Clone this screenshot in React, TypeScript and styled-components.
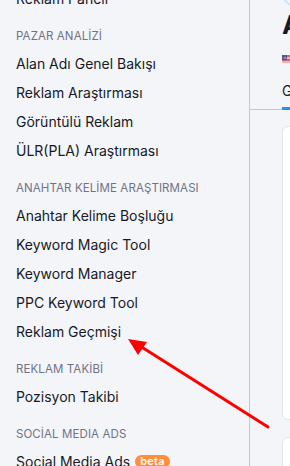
import React from "react";
import styled, { createGlobalStyle } from "styled-components";

const Global = createGlobalStyle`
  html, body { margin: 0; padding: 0; background: #f4f5f9; }
  body { font-family: Inter, "Noto Sans", sans-serif; overflow: hidden; }
  * { box-sizing: border-box; }
`;

const Page = styled.div`
  position: relative;
  width: 290px;
  height: 466px;
  display: flex;
  overflow: hidden;
  background: #f4f5f9;
`;

const Sidebar = styled.nav`
  width: 250px;
  flex: none;
  border-right: 1px solid #c6c7cc;
  display: flex;
  flex-direction: column;
  margin-top: -16px;
`;

const Header = styled.div`
  flex: none;
  height: 26px;
  margin-top: 10px;
  padding-left: 16px;
  display: flex;
  align-items: center;
  font-size: 11.5px;
  color: #6f7385;
  letter-spacing: 0.1px;
  white-space: nowrap;
`;

const Item = styled.div`
  flex: none;
  height: 29px;
  padding-left: 16px;
  display: flex;
  align-items: center;
  gap: 5px;
  font-size: 14px;
  color: #171a26;
  white-space: nowrap;
`;

const Badge = styled.span`
  background: #ff8d3c;
  color: #fff;
  font-size: 11px;
  font-weight: 600;
  line-height: 13px;
  padding: 0 5px;
  border-radius: 7px;
  letter-spacing: 0.3px;
`;

const Main = styled.main`
  flex: 1;
  min-width: 0;
  display: flex;
  flex-direction: column;
  overflow: hidden;
`;

const TopArea = styled.div`
  flex: none;
  padding-left: 32px;
  display: flex;
  flex-direction: column;
`;

const Avatar = styled.div`
  width: 24px;
  height: 24px;
  margin-top: -18px;
  border: 2px solid #cfe2fb;
  border-radius: 50%;
`;

const Title = styled.div`
  margin-top: 3px;
  font-size: 26px;
  font-weight: 700;
  color: #171a26;
  line-height: 32px;
  white-space: nowrap;
`;

const FlagRow = styled.div`
  margin-top: 12px;
  height: 12px;
  display: flex;
`;

const Tabs = styled.div`
  flex: none;
  margin-top: 17px;
  border-bottom: 1px solid #c6c7cc;
  display: flex;
  padding-left: 32px;
`;

const Tab = styled.div`
  font-size: 14px;
  color: #171a26;
  padding-bottom: 8px;
  border-bottom: 3px solid #2b8ff0;
  margin-bottom: -1px;
  white-space: nowrap;
`;

const Cards = styled.div`
  flex: none;
  padding: 16px 0 0 32px;
  display: flex;
  flex-direction: column;
  gap: 17px;
`;

const Card = styled.div<{ $h: number }>`
  flex: none;
  height: ${(p) => p.$h}px;
  width: 200px;
  background: #fff;
  border: 1px solid #e3e4ea;
  border-radius: 6px;
`;

const Arrow = styled.svg`
  position: absolute;
  left: 0;
  top: 0;
  pointer-events: none;
`;

const Flag = () => (
  <svg width="12" height="12" viewBox="0 0 12 12">
    <rect width="12" height="12" fill="#fff" />
    {[0, 2, 4, 6, 8, 10].map((y) => (
      <rect key={y} y={y} width="12" height="1" fill="#b22234" />
    ))}
    <rect width="7" height="7" fill="#3c3b6e" />
    {[1, 3, 5].map((y) =>
      [1, 3, 5].map((x) => <rect key={`${x}-${y}`} x={x} y={y} width="1" height="1" fill="#fff" />)
    )}
  </svg>
);

export default function App() {
  return (
    <Page>
      <Global />
      <Sidebar>
        <Item>Reklam Paneli</Item>
        <Header>PAZAR ANALİZİ</Header>
        <Item>Alan Adı Genel Bakışı</Item>
        <Item>Reklam Araştırması</Item>
        <Item>Görüntülü Reklam</Item>
        <Item>ÜLR(PLA) Araştırması</Item>
        <Header>ANAHTAR KELİME ARAŞTIRMASI</Header>
        <Item>Anahtar Kelime Boşluğu</Item>
        <Item>Keyword Magic Tool</Item>
        <Item>Keyword Manager</Item>
        <Item>PPC Keyword Tool</Item>
        <Item>Reklam Geçmişi</Item>
        <Header>REKLAM TAKİBİ</Header>
        <Item>Pozisyon Takibi</Item>
        <Header>SOCİAL MEDIA ADS</Header>
        <Item>
          Social Media Ads <Badge>beta</Badge>
        </Item>
      </Sidebar>
      <Main>
        <TopArea>
          <Avatar />
          <Title>Alan</Title>
          <FlagRow>
            <Flag />
          </FlagRow>
        </TopArea>
        <Tabs>
          <Tab>Genel</Tab>
        </Tabs>
        <Cards>
          <Card $h={294} />
          <Card $h={120} />
        </Cards>
      </Main>
      <Arrow width="290" height="466" viewBox="0 0 290 466">
        <line x1="268" y1="427" x2="140" y2="346" stroke="#ff0000" strokeWidth="3" strokeLinecap="round" />
        <polygon points="128,339 147,342 138,355" fill="#ff0000" />
      </Arrow>
    </Page>
  );
}
